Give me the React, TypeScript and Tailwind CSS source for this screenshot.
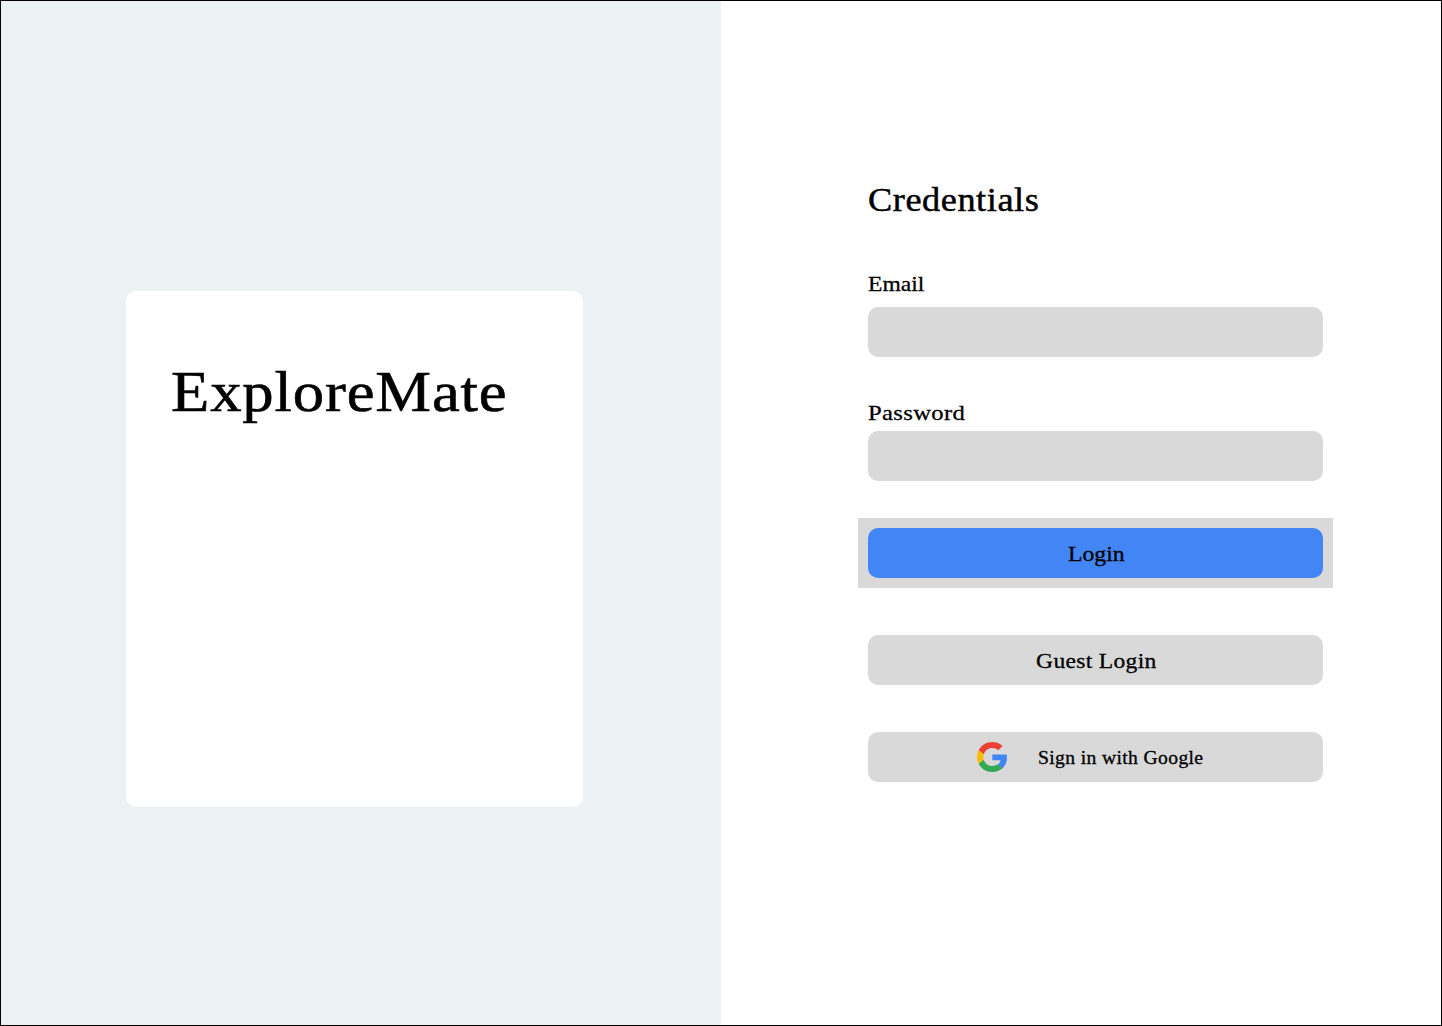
import React from "react";

function GoogleLogo() {
  return (
    <svg viewBox="0 0 47 48" preserveAspectRatio="none" className="size-[30px] shrink-0" aria-hidden="true">
      <path fill="#EA4335" d="M24 9.5c3.54 0 6.71 1.22 9.21 3.6l6.85-6.85C35.9 2.38 30.47 0 24 0 14.62 0 6.51 5.38 2.56 13.22l7.98 6.19C12.43 13.72 17.74 9.5 24 9.5z" />
      <path fill="#4285F4" d="M46.98 24.55c0-1.57-.15-3.09-.38-4.55H24v9.02h12.94c-.58 2.96-2.26 5.48-4.78 7.18l7.73 6c4.51-4.18 7.09-10.36 7.09-17.65z" />
      <path fill="#FBBC05" d="M10.53 28.59c-.48-1.45-.76-2.99-.76-4.59s.27-3.14.76-4.59l-7.98-6.19C.92 16.46 0 20.12 0 24c0 3.88.92 7.54 2.56 10.78l7.97-6.19z" />
      <path fill="#34A853" d="M24 48c6.48 0 11.93-2.13 15.89-5.81l-7.73-6c-2.15 1.45-4.92 2.3-8.16 2.3-6.26 0-11.57-4.22-13.47-9.91l-7.98 6.19C6.51 42.62 14.62 48 24 48z" />
    </svg>
  );
}

export default function App() {
  return (
    <main className="flex h-[1026px] w-[1442px] overflow-hidden border border-black bg-white font-['Liberation_Serif',serif] text-black">
      <section className="w-[720px] shrink-0 bg-[#ecf2f4] pt-[290px] pl-[125px]">
        <div className="h-[516px] w-[457px] rounded-[10px] bg-white pt-[65px] pl-[45px]">
          <h1 className="w-max origin-left scale-x-[1.08] text-[58px] leading-[72px] tracking-[0.8px] [-webkit-text-stroke:0.6px_black]">ExploreMate</h1>
        </div>
      </section>

      <section className="flex-1 pt-[178px] pl-[147px] [-webkit-text-stroke:0.3px_black]">
        <form className="flex w-[455px] flex-col" onSubmit={(e) => e.preventDefault()}>
          <h2 className="h-10 w-max origin-left scale-x-[1.1] text-[33px] leading-[42px] tracking-[0.5px] [-webkit-text-stroke:0.45px_black]">Credentials</h2>

          <label htmlFor="email" className="mt-[51px] h-7 w-max origin-left scale-x-[1.07] text-[22px] leading-7">Email</label>
          <input id="email" type="email" className="mt-[9px] h-[50px] rounded-[10px] bg-[#d9d9d9] px-4 outline-none" />

          <label htmlFor="password" className="mt-[42px] h-7 w-max origin-left scale-x-[1.12] text-[22px] leading-7 tracking-[0.3px]">Password</label>
          <input id="password" type="password" className="mt-1 h-[50px] rounded-[10px] bg-[#d9d9d9] px-4 outline-none" />

          <div className="-mx-2.5 mt-[37px] bg-[#d9d9d9] p-2.5">
            <button className="h-[50px] w-full rounded-[10px] bg-[#4285f4] pl-px text-[22px]">
              <span className="inline-block scale-x-[1.08]">Login</span>
            </button>
          </div>

          <button type="button" className="mt-[47px] h-[50px] rounded-[10px] bg-[#d9d9d9] pl-0.5 text-[22px]">
            <span className="inline-block scale-x-[1.07] tracking-[0.3px]">Guest Login</span>
          </button>

          <button type="button" className="mt-[47px] flex h-[50px] items-center gap-[31px] rounded-[10px] bg-[#d9d9d9] pl-[109px] text-[18px]">
            <GoogleLogo />
            <span className="origin-left scale-x-[1.09] pt-0.5 tracking-[0.33px]">Sign in with Google</span>
          </button>
        </form>
      </section>
    </main>
  );
}
